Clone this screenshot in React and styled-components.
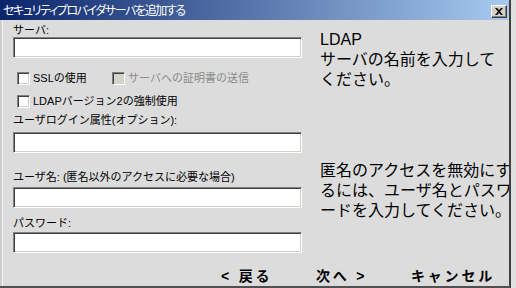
import React from "react";
import styled, { createGlobalStyle } from "styled-components";

const GlobalStyle = createGlobalStyle`
  html, body {
    margin: 0;
    padding: 0;
    background: #e0e0e0;
  }
  body {
    width: 516px;
    height: 288px;
    overflow: hidden;
  }
`;

const FONT = `"Liberation Sans", "Noto Sans CJK JP", sans-serif`;

const Window = styled.div`
  width: 511px;
  height: 288px;
  box-sizing: border-box;
  display: flex;
  flex-direction: column;
  background: #dcdcdc;
  border-right: 2px solid #404040;
  border-bottom: 2px solid #505050;
  overflow: hidden;
  font-family: ${FONT};
  color: #000;
`;

const TitleBar = styled.div`
  flex: none;
  height: 20px;
  box-sizing: border-box;
  padding: 2px 2px 0 3px;
  display: flex;
  align-items: center;
  justify-content: space-between;
  background: linear-gradient(to right, #0a246a, #a6caf0);
`;

const Title = styled.span`
  color: #fff;
  font-size: 12px;
  line-height: 14px;
  letter-spacing: -1.4px;
  font-feature-settings: "palt" 1;
  white-space: nowrap;
`;

const CloseButton = styled.button`
  width: 16px;
  height: 13px;
  padding: 0;
  display: flex;
  align-items: center;
  justify-content: center;
  background: #d4d0c8;
  border: 1px solid;
  border-color: #fff #404040 #404040 #fff;
  box-shadow: inset -1px -1px #808080;
`;

const Client = styled.div`
  flex: 1;
  display: flex;
  flex-direction: column;
  box-shadow: inset 2px 0 #cfcfcf, inset 3px 0 #f4f4f4;
`;

const Content = styled.div`
  display: flex;
  flex: 1;
  min-height: 0;
`;

const LeftPane = styled.div`
  flex: none;
  width: 289px;
  padding-left: 13px;
  display: flex;
  flex-direction: column;
`;

const Label = styled.div`
  font-size: 11px;
  line-height: 13px;
  margin-top: ${(p) => p.$mt || 0}px;
  white-space: nowrap;
`;

const TextInput = styled.input`
  display: block;
  width: 289px;
  height: 21px;
  box-sizing: border-box;
  margin: ${(p) => p.$mt || 0}px 0 0 0;
  padding: 0 3px;
  background: #fff;
  border: 1px solid;
  border-color: #808080 #fff #fff #808080;
  box-shadow: inset 1px 1px #404040, inset -1px -1px #d4d0c8;
  outline: none;
  font-family: ${FONT};
  font-size: 11px;
`;

const CheckRow = styled.div`
  display: flex;
  align-items: center;
  height: 13px;
  margin-top: ${(p) => p.$mt}px;
  padding-left: 4px;
`;

const CheckItem = styled.label`
  display: flex;
  align-items: center;
  gap: 3px;
  width: ${(p) => (p.$w ? `${p.$w}px` : "auto")};
  font-size: 11px;
  line-height: 13px;
  white-space: nowrap;
  color: ${(p) => (p.$disabled ? "#8a8a8a" : "#000")};
`;

const Box = styled.span`
  flex: none;
  width: 13px;
  height: 13px;
  box-sizing: border-box;
  background: ${(p) => (p.$disabled ? "#d4d4cc" : "#fff")};
  border: 1px solid;
  border-color: #808080 #fff #fff #808080;
  box-shadow: inset 1px 1px #404040, inset -1px -1px #d4d0c8;
`;

const RightPane = styled.div`
  flex: 1;
  min-width: 0;
  overflow: hidden;
  margin-left: 18px;
  padding-top: 10px;
`;

const Help = styled.div`
  font-size: 16px;
  line-height: 20px;
  white-space: nowrap;
  margin-top: ${(p) => p.$mt || 0}px;
`;

const Footer = styled.div`
  flex: none;
  height: 18px;
  display: flex;
  padding-left: 221px;
`;

const FooterButton = styled.span`
  width: 95px;
  font-size: 14px;
  line-height: 16px;
  font-weight: bold;
  letter-spacing: 2.8px;
  white-space: nowrap;
`;

const CloseIcon = () => (
  <svg width="8" height="7" viewBox="0 0 8 7">
    <path d="M0 0h2l2 2 2-2h2L5 3.5 8 7H6L4 5 2 7H0l3-3.5z" fill="#000" />
  </svg>
);

export default function App() {
  return (
    <>
      <GlobalStyle />
      <Window>
        <TitleBar>
          <Title>セキュリティプロバイダサーバを追加する</Title>
          <CloseButton aria-label="閉じる">
            <CloseIcon />
          </CloseButton>
        </TitleBar>
        <Client>
          <Content>
            <LeftPane>
              <Label $mt={4}>サーバ:</Label>
              <TextInput />
              <CheckRow $mt={14}>
                <CheckItem $w={95}>
                  <Box />
                  SSLの使用
                </CheckItem>
                <CheckItem $disabled>
                  <Box $disabled />
                  サーバへの証明書の送信
                </CheckItem>
              </CheckRow>
              <CheckRow $mt={10}>
                <CheckItem>
                  <Box />
                  LDAPバージョン2の強制使用
                </CheckItem>
              </CheckRow>
              <Label $mt={6}>ユーザログイン属性(オプション):</Label>
              <TextInput $mt={5} />
              <Label $mt={18}>ユーザ名: (匿名以外のアクセスに必要な場合)</Label>
              <TextInput $mt={3} />
              <Label $mt={9}>パスワード:</Label>
              <TextInput $mt={2} type="password" />
            </LeftPane>
            <RightPane>
              <Help>LDAP</Help>
              <Help>サーバの名前を入力して</Help>
              <Help>ください。</Help>
              <Help $mt={71}>匿名のアクセスを無効にす</Help>
              <Help>るには、ユーザ名とパスワ</Help>
              <Help>ードを入力してください。</Help>
            </RightPane>
          </Content>
          <Footer>
            <FooterButton>&lt; 戻る</FooterButton>
            <FooterButton>次へ &gt;</FooterButton>
            <FooterButton>キャンセル</FooterButton>
          </Footer>
        </Client>
      </Window>
    </>
  );
}
